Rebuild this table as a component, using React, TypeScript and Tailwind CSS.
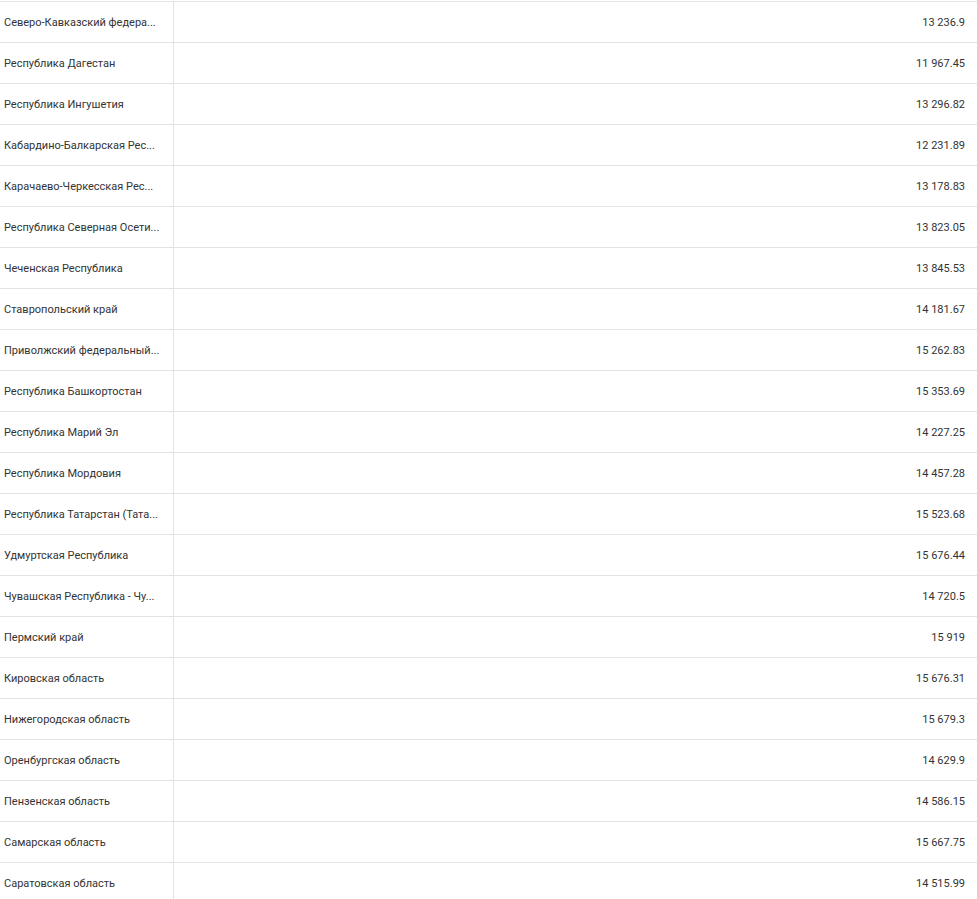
import React from "react";

const rows: [string, string][] = [
  ["Северо-Кавказский федера...", "13 236.9"],
  ["Республика Дагестан", "11 967.45"],
  ["Республика Ингушетия", "13 296.82"],
  ["Кабардино-Балкарская Рес...", "12 231.89"],
  ["Карачаево-Черкесская Рес...", "13 178.83"],
  ["Республика Северная Осети...", "13 823.05"],
  ["Чеченская Республика", "13 845.53"],
  ["Ставропольский край", "14 181.67"],
  ["Приволжский федеральный...", "15 262.83"],
  ["Республика Башкортостан", "15 353.69"],
  ["Республика Марий Эл", "14 227.25"],
  ["Республика Мордовия", "14 457.28"],
  ["Республика Татарстан (Тата...", "15 523.68"],
  ["Удмуртская Республика", "15 676.44"],
  ["Чувашская Республика - Чу...", "14 720.5"],
  ["Пермский край", "15 919"],
  ["Кировская область", "15 676.31"],
  ["Нижегородская область", "15 679.3"],
  ["Оренбургская область", "14 629.9"],
  ["Пензенская область", "14 586.15"],
  ["Самарская область", "15 667.75"],
  ["Саратовская область", "14 515.99"],
];

export default function App() {
  return (
    <div className="w-[977px] h-[899px] overflow-hidden bg-white pt-px text-[11px] text-[#333333] [font-family:Roboto,'Liberation_Sans',sans-serif]">
      <div className="border-t border-[#e3e3e3]">
        {rows.map(([name, value], i) => (
          <div key={i} className="flex h-[41px] border-b border-[#e3e3e3]">
            <div className="w-[174px] shrink-0 border-r border-[#e3e3e3] pl-1 pr-1 pt-[2px] flex items-center min-w-0">
              <span className="whitespace-nowrap">{name}</span>
            </div>
            <div className="flex-1 flex items-center justify-end pr-3 pt-[2px]">{value}</div>
          </div>
        ))}
      </div>
    </div>
  );
}
